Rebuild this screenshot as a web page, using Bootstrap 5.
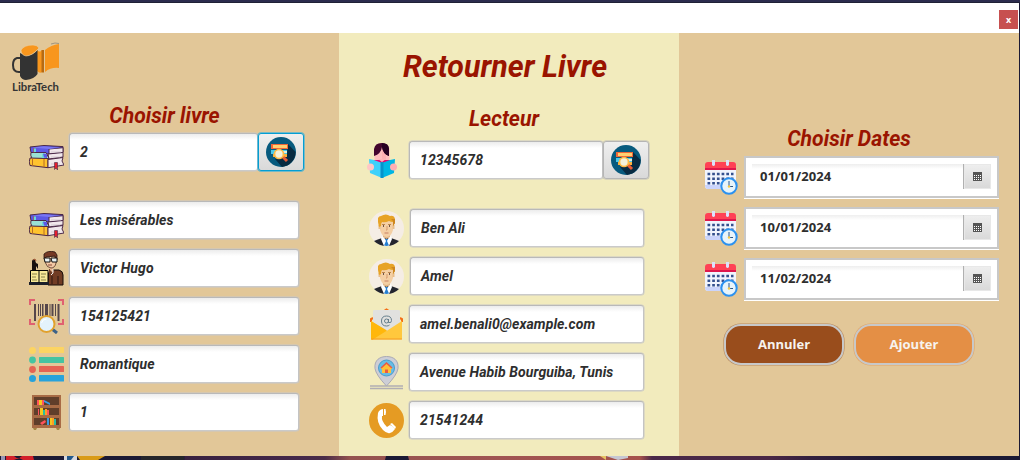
<!DOCTYPE html>
<html lang="fr">
<head>
<meta charset="utf-8">
<meta name="viewport" content="width=device-width, initial-scale=1">
<title>LibraTech - Retourner Livre</title>
<link href="https://cdn.jsdelivr.net/npm/bootstrap@5.3.0/dist/css/bootstrap.min.css" rel="stylesheet">
<style>
body{height:460px;overflow:hidden;font-family:Roboto,"Liberation Sans",sans-serif;background:#1b1934;color:#2e2e2e}
.edge-top{height:3px;background:#2c2c4e;border-bottom:1px solid #202136}
.edge-bottom{height:4px;background:linear-gradient(90deg,#1b1934 184px,#38213f 185px,#45284a 300px,#4a2c48 325px,#94524f 350px,#a05452 500px,#a6524b 640px,#4a2849 652px,#4a2745 770px,#33203e 810px,#1b1934 900px)}
.edge-bottom svg{display:block}
.window{width:1019px}
.titlebar{height:30px;padding:7px 1px 0 0}
.close-box{width:19px;height:19px;background:#c75050;color:#fff;font:bold 9px/17px "Open Sans",sans-serif;padding:0;border:0}
.panels{height:423px}
.panel{background:#e2c798;width:340px}
.panel-first{width:339px}
.panel-mid{background:#f2ebbd}
.heading{color:#9a1400;font-style:italic;font-weight:700;font-size:21.2px;line-height:24px;margin:0;text-align:center}
.heading-main{font-size:30.4px;line-height:36px}
.ico{width:35px;height:35px;margin:2px 5px 0 0;flex:none;overflow:visible}
.rows{gap:10px}
.field{height:38px;border:1px solid #bcbcbc;border-color:#b9b9b9 #c4c4c4 #cacaca #b9b9b9;border-radius:3px;background:linear-gradient(#ececec,#fff 6px);box-shadow:0 0 0 .5px #c8c8c8;font-style:italic;font-weight:700;font-size:14px;letter-spacing:.09px;padding:0 10px;color:#2e2e2e;flex:none;line-height:36px;white-space:nowrap}
.find{width:46px;height:38px;border:1px solid #b5b5b5;border-radius:3px;padding:0;background:linear-gradient(#efefef,#d9d9d9);box-shadow:0 0 0 .5px #bbb;flex:none}
.find.focused{border:1px solid #039ed3;box-shadow:0 0 0 .7px #4fb5d6;height:38px}
.find svg{width:30px;height:30px;display:block;margin:auto}
.picker{width:255px;height:42px;border:2px solid #c8c8c8;background:#fff;box-shadow:0 1px 0 #fff;padding:6px;font:bold 13px/24px "Noto Sans",sans-serif;letter-spacing:.1px;margin-left:-1px}
.picker-text{background:linear-gradient(#eee,#fff 5px);padding-left:8px;border-right:1px solid #b0b0b0;height:25px}
.picker-btn{width:27px;height:25px;background:linear-gradient(#eee,#d9d9d9);border:1px solid #e8e8e8}
.act{width:120px;height:41px;border-radius:17px;border:2px solid #c8c8c8;color:#f7f3ee;font:bold 13px/35px "Open Sans",sans-serif;padding:0 0 1px}
.act-cancel{background:#994d1c;box-shadow:0 0 0 .6px #b98a5c}
.act-add{background:#e48f45;box-shadow:0 0 0 .6px #e3a566}
</style>
</head>
<body>
<svg width="0" height="0" class="position-absolute" aria-hidden="true">
<defs>
<symbol id="books" viewBox="0 0 35 35">
 <g stroke="#4a2848" stroke-width="1">
 <path d="M1 12 15 10.500 34 11.600 34 17 20 19 2 17.500Z" fill="#5d59e6"/>
 <path d="M20 14 34 12.700v5L20 19Z" fill="#f1e8ec"/>
 <path d="M2 17.500h15l3 6H3Q1 20 2 17.500Z" fill="#9ae1d4"/>
 <path d="M19 19 34 17.500V22l-14 2Z" fill="#f1e8ec"/>
 <path d="M1 23 19 23.500V32.700L1 30.500Q-.5 27 1 23Z" fill="#ffc32e"/>
 <path d="M19 24.500 34 22.500 33 26l2 4-16 2.700Z" fill="#f1e8ec"/>
 <path d="M5 13v4.500M3.500 23.400V31M15 24v8" fill="none" stroke="#b86d24"/>
 </g>
 <path d="M5 13.500h2V17H5ZM13 19h3v4h-3Z" fill="#6ad8d9"/><path d="M14 18.500 18 19v4l-3-.5Z" fill="#5d59e6"/>
 <path d="m3 12.600 12-1.300 16 1.400-11 1.200Z" fill="#7a77f2"/>
 <path d="M22 17h10M22 22h9M22 29h9" stroke="#c8bec8" stroke-width=".7"/>
 <path d="M25.500 27.500h3V35L27 33l-1.500 1.500Z" fill="#e51d2d" stroke="#4a2848" stroke-width=".6"/>
</symbol>
<symbol id="writer" viewBox="0 0 35 35">
 <path d="M19 34V23q1-3 5-4h6q4 1 4 5v10Z" fill="#713c24" stroke="#150c09"/>
 <path d="M20 18h5l-2 6-3 1Z" fill="#713c24"/><path d="m20 14 4 4v4l-3-3Z" fill="#e8b58f"/>
 <path d="M16 5h11v7q-1 5-5 5t-6-6Z" fill="#f2c8a4" stroke="#3b1b12" stroke-width=".7"/>
 <path d="M15 7V3q4-4 11-2l2 3v5h-2V5l-9 1-1 3Z" fill="#753a25" stroke="#281410" stroke-width=".8"/>
 <path d="M15 7h6v4h-5ZM22 7h6v4h-5Z" fill="#e9f3f5" stroke="#101010"/>
 <path d="M19 14h4" stroke="#8b4937"/><path d="M24 18v4l-2 2" fill="none" stroke="#eee"/>
 <path d="M3 20V10q1-3 3-1l1 3 2 1v5l-2-3v5Z" fill="#17100f"/><path d="m4 9 2-1 1 2" stroke="#a05432" fill="none"/>
 <path d="M1.500 19.500h17.500V32H1.500Z" fill="#f7e997" stroke="#050505"/>
 <path d="M0 31h20v3H0Z" fill="#1a1e29"/><path d="M10 19v13" stroke="#050505"/>
 <path d="M3 23h5M3 26h4M3 29h5M12 23h5M12 26h4M12 29h5" stroke="#6b6538" stroke-width=".8"/>
 <path d="M29 25v8M23 25v8" stroke="#2c1711"/>
</symbol>
<symbol id="barcode" viewBox="0 0 35 35">
 <path d="M1 6V1h5M29 1h5v5M1 20v5h5M29 25h5v-5" fill="none" stroke="#e06070" stroke-width="2"/>
 <path d="M5 5h2v17H5ZM9 5h1v12H9ZM11 5h1v12h-1ZM13 5h1.500v12H13ZM16 5h3v12h-3ZM20.500 5h1v12h-1ZM22.500 5h2v12h-2ZM26 5h1v12h-1ZM28.500 5h2v17h-2Z" fill="#56474b"/>
 <path d="m23 30 5 4" stroke="#3d6287" stroke-width="3"/><circle cx="17.500" cy="25" r="8" fill="#e3f2fb" stroke="#e1a12d" stroke-width="2"/><path d="M12.500 24q1-4 5-4" stroke="#fff" fill="none"/>
</symbol>
<symbol id="list" viewBox="0 0 35 35">
 <g fill="#fcd462"><circle cx="3.500" cy="3.500" r="3.500"/><rect x="10" width="25" height="6" rx=".6"/></g>
 <g fill="#44c4a1"><circle cx="3.500" cy="13" r="3.400"/><rect x="10" y="10" width="25" height="6" rx=".6"/></g>
 <g fill="#e56353"><circle cx="3.500" cy="22.500" r="3.400"/><rect x="10" y="19" width="25" height="6" rx=".6"/></g>
 <g fill="#27a2db"><circle cx="3.500" cy="31.500" r="3.500"/><rect x="10" y="28" width="25" height="6.500" rx=".6"/></g>
</symbol>
<symbol id="bookcase" viewBox="0 0 35 35">
 <path d="M4 33h4l-1 2H5ZM27 33h4l-1 2h-2Z" fill="#a58745"/><path d="M3 0h29v33H3Z" fill="#a86b45"/>
 <path d="M5 2h25v8H5ZM5 13h25v7H5ZM5 23h25v7H5Z" fill="#603e2a"/>
 <path d="M8 5h2v5H8ZM13 5h2v5h-2ZM9 14h1v6H9ZM18 15h2v5h-2ZM11 28l5-3 1 2-4 3Z" fill="#ff535c"/>
 <path d="M10 5h3v5h-3ZM11 13h3v7h-3ZM21 23h2v7h-2Z" fill="#f6c71f"/>
 <path d="m15 5 6 3v2l-6-3ZM18 23h2v7h-2Z" fill="#3a9be3"/>
 <path d="M14 15h2v5h-2ZM25 24h2v6h-2Z" fill="#2bbda0"/><path d="M16 14h2v6h-2ZM23 23h2v7h-2Z" fill="#ff9d24"/>
</symbol>
<symbol id="finder" viewBox="0 0 30 30">
 <circle cx="15" cy="15" r="15" fill="#075a7e"/>
 <path d="m22 7 7.500 8A15 15 0 0 1 16 30L9 22l12-5Z" fill="#082b42"/>
 <path d="M5 7h17v5H5Z" fill="#ef6737"/><path d="M7 8h14v3H7Z" fill="#ffd071"/>
 <path d="M5 13h16v4H5Z" fill="#49c9eb"/><path d="M7 17h14v3H7Z" fill="#ffb03b"/><path d="M15 14h6v2h-6Z" fill="#e6edda"/>
 <path d="m17 20 4 4" stroke="#e75a35" stroke-width="3"/><circle cx="13" cy="17" r="4.500" fill="#f4f1da" stroke="#ffba45" stroke-width="1.700"/>
</symbol>
<symbol id="reader" viewBox="0 0 35 35">
 <path d="M7.500 17V6q1-6 7.500-6t7.500 6v11Z" fill="#ffbebd"/><path d="M15 4h4v13h-4Z" fill="#ffb0b3"/>
 <path d="M7 13V6q1-6 7.500-6T22 6v7q-6-2-7-9-1 7-8 9Z" fill="#42052d"/><path d="M15 0q7 0 7 6v7q-6-2-7-9Z" fill="#270021"/>
 <path d="M7 17h16v4H7Z" fill="#e60772"/><path d="m11 16 4 3 4-3Z" fill="#ffb5b7"/>
 <path d="m2 16 5 1 8 3v15L3 30Z" fill="#3ed1fb"/><path d="m28 16-5 1-8 3v15l12-5Z" fill="#00b6e4"/>
 <path d="M13.500 19h3v16l-1 .5-2-.5Z" fill="#0792cb"/><circle cx="3.500" cy="24" r="3.500" fill="#ffc7c5"/><circle cx="26.500" cy="24" r="3.500" fill="#ffafb3"/>
</symbol>
<symbol id="person" viewBox="0 0 35 35">
 <circle cx="17.500" cy="17.500" r="17.500" fill="#f5ede5"/>
 <path d="M5 30q5-2 8-3h9q3 1 8 3-5 5-12.500 5T5 30Z" fill="#23252e"/>
 <path d="m13 25 4.500 4 4.500-4 1 3-3 7h-5l-3-7Z" fill="#fff"/><path d="M16 28h3l-1 2 2 4.500q-2.500.8-5 0l2-4.500Z" fill="#267fd1"/>
 <path d="M14 22h7v4l-3.500 2-3.500-2Z" fill="#dfb384"/>
 <path d="M11 8h13v11q-2 7-6.500 7T11 19Z" fill="#f4cfa4"/><path d="M9.500 14h2v4h-2ZM23.500 14h2v4h-2Z" fill="#e7bd8b"/>
 <path d="M9 11V7q1-2 3-2 5-3 9 0 4-1 5 3v4l-2 3v-4q-2 0-4-1-4 2-7 1-1 1-1 4l-2 1Z" fill="#e7a326"/><path d="M22 8h4v4l-2 3V10Z" fill="#cd8620"/>
 <path d="M13 13.500h3M19 13.500h3" stroke="#ae7235" stroke-width=".8"/><path d="M14 15h1M20 15h1" stroke="#432f29" stroke-width="1.300"/><path d="M18 15v4h-1" stroke="#d49a6e" fill="none"/><path d="M15.500 22h4" stroke="#c78064"/>
</symbol>
<symbol id="mail" viewBox="0 0 35 35">
 <path d="M2 15v-3l2-1M33 15v-3l-2-1M15 4l2.500-1.500L20 4" stroke="#f36f16" stroke-width="2" fill="#f36f16"/>
 <path d="M4 4q0-1 2-1h23q2 0 2 1v20H4Z" fill="#e1e1df"/>
 <path d="m2 14 15.500 10L33 14v17.500q0 1-1 1H3q-1 0-1-1Z" fill="#ffc83d"/><path d="M2 14 18 23.500 3 33q-1-1-1-2Z" fill="#ffb70b"/>
 <path d="M2 32h31" stroke="#f59b22"/>
 <circle cx="17.500" cy="14" r="2" fill="none" stroke="#657e8b"/><path d="M19.500 12v3.500q3 1 3-2 0-4.500-5-4.500t-5 5 5 5q2 0 3-1" fill="none" stroke="#657e8b"/>
</symbol>
<symbol id="pin" viewBox="0 0 35 35">
 <path d="M1 31h33M1 33.500h33" stroke="#b1aeb3" stroke-width="1.500"/>
 <path d="M17.500 31Q7 20 6 13.500C5 5 11 1.500 17.500 1.500S30 5 29 13.500Q28 20 17.500 31Z" fill="#cdced6" stroke="#aaa9b4"/>
 <circle cx="17.500" cy="13" r="8" fill="#67bde5" stroke="#4b9ccb"/><path d="m12 13 5.500-5 5.500 5v1h-1v4h-9v-4h-1Z" fill="#ffc038"/><path d="m12 13 5.500-5 5.500 5" fill="none" stroke="#e95a47" stroke-width="1.600"/><path d="M16 14.500h3V18h-3Z" fill="#e95a47"/>
</symbol>
<symbol id="phone" viewBox="0 0 35 35">
 <circle cx="17.500" cy="17.500" r="17.500" fill="#e59b23"/>
 <path d="M10 8q2-2 4-2v7h-1q-1 5 5 11l3-2q3 1 5 4-2 3-5 4-3 1-7-3Q7 20 9 10Z" fill="#fff"/><path d="M15 6h1.500q1 3 0 6H15ZM21 21l2-1 4 4-1 2Z" fill="#fff"/>
</symbol>
<symbol id="calendar" viewBox="0 0 35 35">
 <path d="M0 8h31v18q0 3-3 3H3q-3 0-3-3Z" fill="#f1f4fd"/><path d="M0 25h31q0 4-3 4H3q-3 0-3-4Z" fill="#cbd4fb"/>
 <path d="M0 10V5q0-3 3-3h25q3 0 3 3v5Z" fill="#ff4155"/><path d="M0 8h31v2H0Z" fill="#df174c"/>
 <path d="M7 0h3v5q-1.500 2-3 0ZM21 0h3v5q-1.500 2-3 0Z" fill="#dce1fb"/>
 <path d="M2.500 14h26M2.500 18.700h26M2.500 23.300h17" stroke="#35508e" stroke-width="2.500" stroke-dasharray="2.700 2"/>
 <circle cx="24" cy="26" r="7.700" fill="#e7f4fb" stroke="#2c91ef" stroke-width="2"/><path d="M24 21v5.500h4" fill="none" stroke="#28568d"/><circle cx="24" cy="26.500" r="1.200" fill="#ffca3d"/>
</symbol>
<symbol id="grid" viewBox="0 0 9 9"><path d="M0 0h9v9H0Z" fill="#555"/><path d="M1 3.500h7M1 5.500h7M1 7.500h7" stroke="#fff" stroke-dasharray="1 1"/></symbol>
</defs></svg>

<div class="edge-top"></div>
<main class="window">
 <header class="titlebar bg-white d-flex justify-content-end">
  <button class="close-box" aria-label="Fermer">x</button>
 </header>
 <div class="panels d-flex">
  <section class="panel panel-first">
   <svg class="d-block" width="70" height="70" viewBox="0 0 70 70" aria-label="LibraTech">
    <path d="M20 25h-3q-4 1-4 7 0 7 6 7h2" fill="none" stroke="#333" stroke-width="2"/>
    <path d="M37 17q3 3 5 0v22q-2 2-5-1Z" fill="#f8961d"/><path d="M41.500 17h2.500v22.500h-2.500Z" fill="#b76a12"/>
    <path d="M45 17q6-5 14-6v24q-8-1-14 4Z" fill="#f8961d"/><path d="m51 11 4-1 4 .5" stroke="#8e8879" stroke-width=".8" fill="none"/>
    <path d="M20 20q10 6 17.500-3v24q-3 5-11.500 6-4 0-6-4Z" fill="#333"/>
    <path d="M21 17q3-5 12-5 4 0 6 3-7 8-13 8-5-1-5-6Z" fill="#f8961d" stroke="#e8d2aa" stroke-width=".6"/>
    <text x="12" y="58" textLength="47" lengthAdjust="spacingAndGlyphs" font-family="Lato" font-weight="700" font-size="11" fill="#343434">LibraTech</text>
   </svg>
   <h2 class="heading" style="padding:1px 10px 0 0">Choisir livre</h2>
   <div class="d-flex" style="margin:5px 0 30px 29px"><svg class="ico"><use href="#books"/></svg><div class="field" style="width:189px">2</div><button class="find focused"><svg><use href="#finder"/></svg></button></div>
   <div class="rows d-flex flex-column" style="margin-left:29px">
    <div class="d-flex"><svg class="ico"><use href="#books"/></svg><div class="field" style="width:230px">Les misérables</div></div>
    <div class="d-flex"><svg class="ico"><use href="#writer"/></svg><div class="field" style="width:230px">Victor Hugo</div></div>
    <div class="d-flex"><svg class="ico"><use href="#barcode"/></svg><div class="field" style="width:230px">154125421</div></div>
    <div class="d-flex"><svg class="ico"><use href="#list"/></svg><div class="field" style="width:230px">Romantique</div></div>
    <div class="d-flex"><svg class="ico"><use href="#bookcase"/></svg><div class="field" style="width:230px">1</div></div>
   </div>
  </section>
  <section class="panel panel-mid">
   <h1 class="heading heading-main" style="padding:16px 8px 0 0">Retourner Livre</h1>
   <h2 class="heading" style="padding:22px 10px 0 0">Lecteur</h2>
   <div class="d-flex" style="margin:10px 0 30px 28px"><svg class="ico" style="margin-right:7px"><use href="#reader"/></svg><div class="field" style="width:194px">12345678</div><button class="find"><svg><use href="#finder"/></svg></button></div>
   <div class="rows d-flex flex-column" style="margin-left:30px">
    <div class="d-flex"><svg class="ico"><use href="#person"/></svg><div class="field" style="width:234px;margin-left:1px">Ben Ali</div></div>
    <div class="d-flex"><svg class="ico"><use href="#person"/></svg><div class="field" style="width:234px;margin-left:1px">Amel</div></div>
    <div class="d-flex"><svg class="ico"><use href="#mail"/></svg><div class="field" style="width:235px">amel.benali0@example.com</div></div>
    <div class="d-flex"><svg class="ico"><use href="#pin"/></svg><div class="field" style="width:235px">Avenue Habib Bourguiba, Tunis</div></div>
    <div class="d-flex"><svg class="ico"><use href="#phone"/></svg><div class="field" style="width:235px">21541244</div></div>
   </div>
  </section>
  <section class="panel">
   <h2 class="heading" style="padding:94px 0 0">Choisir Dates</h2>
   <div class="d-flex flex-column" style="gap:9px;margin:5px 0 0 26px">
    <div class="d-flex"><svg class="ico mt-1"><use href="#calendar"/></svg><div class="picker d-flex"><div class="picker-text flex-grow-1">01/01/2024</div><div class="picker-btn d-flex align-items-center justify-content-center"><svg width="9" height="9"><use href="#grid"/></svg></div></div></div>
    <div class="d-flex"><svg class="ico mt-1"><use href="#calendar"/></svg><div class="picker d-flex"><div class="picker-text flex-grow-1">10/01/2024</div><div class="picker-btn d-flex align-items-center justify-content-center"><svg width="9" height="9"><use href="#grid"/></svg></div></div></div>
    <div class="d-flex"><svg class="ico mt-1"><use href="#calendar"/></svg><div class="picker d-flex"><div class="picker-text flex-grow-1">11/02/2024</div><div class="picker-btn d-flex align-items-center justify-content-center"><svg width="9" height="9"><use href="#grid"/></svg></div></div></div>
   </div>
   <div class="d-flex" style="gap:10px;margin:24px 0 0 45px"><button class="act act-cancel">Annuler</button><button class="act act-add">Ajouter</button></div>
  </section>
 </div>
</main>
<div class="edge-bottom">
 <svg width="1020" height="4">
 <path d="M386 0h22l1 4h-24Z" fill="#1b1934"/>
 <path d="M1 0h4v4H1Z" fill="#9695b4"/><path d="M6 0h8l4 3 4-3h11l1 4H23l-4-2-5 2H6Z" fill="#d3202a"/><path d="M64 0h13v4H64Z" fill="#d8d8dc"/><path d="M67 0h7l-3 4h-4Z" fill="#22588b"/><path d="M77 0h28l-7 4H80Z" fill="#d99b18"/><path d="M141 0h43v4h-43Z" fill="#25252a"/><path d="M600 0h6v4Z" fill="#e5c263"/><path d="M606 0h22v2l-10 2Z" fill="#c6c7d2"/></svg>
</div>
</body>
</html>
